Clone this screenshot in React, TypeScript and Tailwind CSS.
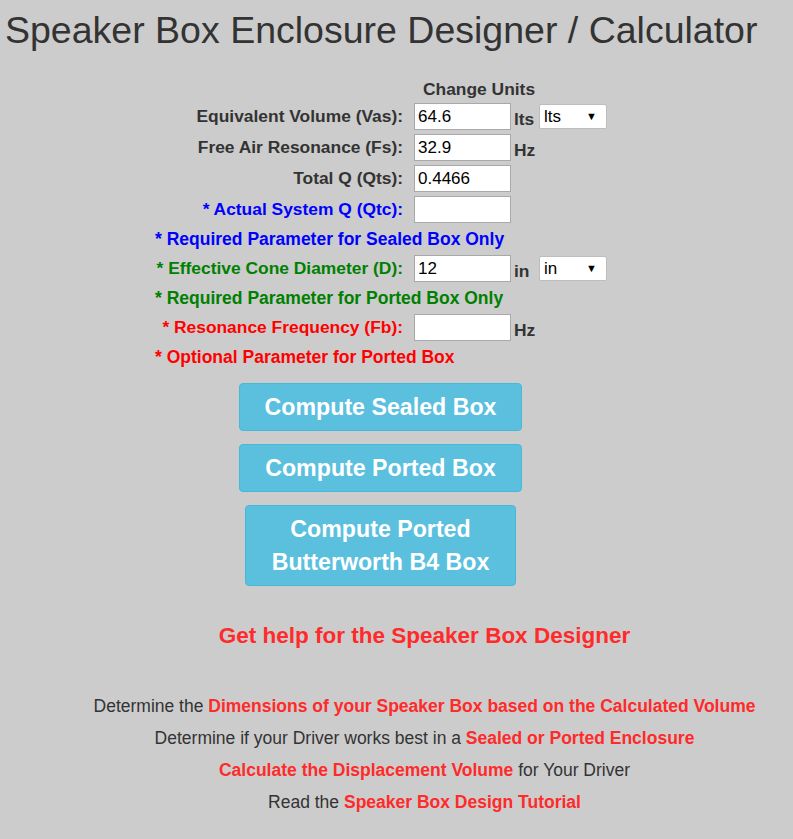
import React from "react";

const Field = ({ value }: { value: string }) => (
  <div className="w-[97px] h-[27px] bg-white border border-[#a9a9a9] pl-[3px] flex items-center text-[17px] font-normal text-black">
    {value}
  </div>
);

const Unit = ({ value }: { value: string }) => (
  <div className="w-[68px] h-[25px] bg-white border border-[#bdbdbd] rounded-[2px] pl-[4px] pr-[9px] flex items-center justify-between text-[17px] font-normal text-black">
    <span>{value}</span>
    <span className="text-[11px]">▼</span>
  </div>
);

const rows = [
  { label: "Equivalent Volume (Vas):", value: "64.6", unit: "lts", select: "lts", color: "text-[#333333]" },
  { label: "Free Air Resonance (Fs):", value: "32.9", unit: "Hz", color: "text-[#333333]" },
  { label: "Total Q (Qts):", value: "0.4466", color: "text-[#333333]" },
  { label: "* Actual System Q (Qtc):", value: "", color: "text-[#0000ff]", note: "* Required Parameter for Sealed Box Only" },
  { label: "* Effective Cone Diameter (D):", value: "12", unit: "in", select: "in", color: "text-[#008000]", note: "* Required Parameter for Ported Box Only" },
  { label: "* Resonance Frequency (Fb):", value: "", unit: "Hz", color: "text-[#ff0000]", note: "* Optional Parameter for Ported Box" },
];

export default function App() {
  return (
    <div className="min-h-screen bg-[#cccccc] text-[#333333] font-['Liberation_Sans',Arial,sans-serif] pb-8">
      <h1 className="pl-[5px] pt-[8px] text-[37.5px] leading-[44px] font-normal">
        Speaker Box Enclosure Designer / Calculator
      </h1>

      {/* input table */}
      <div className="ml-[155px] mt-[25px] w-[452px]">
        <div className="h-[24px] flex items-center font-bold text-[17.4px]">
          <span className="w-[248px]" />
          <span className="ml-[20px]">Change Units</span>
        </div>
        {rows.map((row) => (
          <React.Fragment key={row.label}>
            <div className="h-[31px] flex items-center font-bold text-[17.4px]">
              <span className={`w-[248px] text-right whitespace-nowrap ${row.color}`}>{row.label}</span>
              <span className="ml-[11px]">
                <Field value={row.value} />
              </span>
              <span className="w-[28px] pl-[3px] pt-[5px]">{row.unit}</span>
              {row.select && <Unit value={row.select} />}
            </div>
            {row.note && (
              <div className={`h-[28px] flex items-center font-bold text-[17.5px] whitespace-nowrap ${row.color}`}>{row.note}</div>
            )}
          </React.Fragment>
        ))}
      </div>

      {/* buttons */}
      <div className="mt-[12px] pr-[32px] flex flex-col items-center gap-[13px] text-white font-bold text-[23.2px] leading-[33px]">
        <button className="bg-[#5bc0de] border border-[#46b8da] rounded-[4px] px-[25px] py-[6.5px]">
          Compute Sealed Box
        </button>
        <button className="bg-[#5bc0de] border border-[#46b8da] rounded-[4px] px-[25px] py-[6.5px]">
          Compute Ported Box
        </button>
        <button className="bg-[#5bc0de] border border-[#46b8da] rounded-[4px] px-[26px] py-[6.5px]">
          Compute Ported
          <br />
          Butterworth B4 Box
        </button>
      </div>

      <div className="pl-[56px] text-center">
        <div className="mt-[33px] text-[22.5px] font-bold text-[#ff2a2a]">Get help for the Speaker Box Designer</div>
        <div className="mt-[37px] text-[17.5px] leading-[32px]">
          <p>
            Determine the <b className="text-[#ff2a2a]">Dimensions of your Speaker Box based on the Calculated Volume</b>
          </p>
          <p>
            Determine if your Driver works best in a <b className="text-[#ff2a2a]">Sealed or Ported Enclosure</b>
          </p>
          <p>
            <b className="text-[#ff2a2a]">Calculate the Displacement Volume</b> for Your Driver
          </p>
          <p>
            Read the <b className="text-[#ff2a2a]">Speaker Box Design Tutorial</b>
          </p>
        </div>
      </div>
    </div>
  );
}
